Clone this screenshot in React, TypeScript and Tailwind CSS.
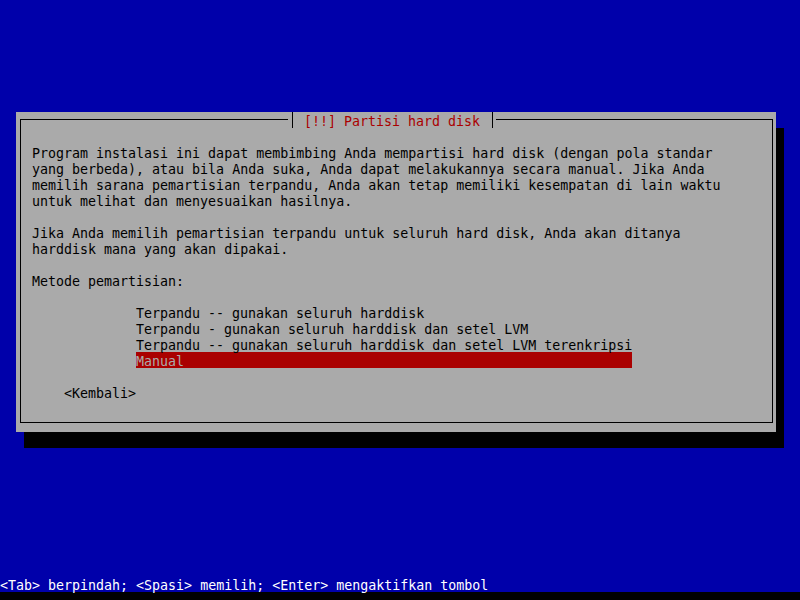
const bodyLines = [
  'Program instalasi ini dapat membimbing Anda mempartisi hard disk (dengan pola standar',
  'yang berbeda), atau bila Anda suka, Anda dapat melakukannya secara manual. Jika Anda',
  'memilih sarana pemartisian terpandu, Anda akan tetap memiliki kesempatan di lain waktu',
  'untuk melihat dan menyesuaikan hasilnya.',
  '',
  'Jika Anda memilih pemartisian terpandu untuk seluruh hard disk, Anda akan ditanya',
  'harddisk mana yang akan dipakai.',
  '',
  'Metode pemartisian:',
  '',
]

const options = [
  'Terpandu -- gunakan seluruh harddisk',
  'Terpandu - gunakan seluruh harddisk dan setel LVM',
  'Terpandu -- gunakan seluruh harddisk dan setel LVM terenkripsi',
  'Manual',
]

const App = () => {
  return (
    <div className="w-[800px] h-[600px] bg-black overflow-hidden font-['DejaVu_Sans_Mono',monospace] text-[13.3px] leading-[20px]">
      <div className="h-[592px] bg-[#0000aa] flex flex-col">
        {/* DIALOG */}
        <div className="mt-[112px] ml-[16px] w-[760px] h-[320px] bg-[#aaaaaa] shadow-[8px_16px_0_#000] pt-[7px] pl-[4px] pr-[3px] pb-[9px]">
          <div className="relative h-full border border-black pt-[24px] pl-[11px] text-black">
            {/* title over top border */}
            <div className="absolute left-[267px] top-[-8px] h-4 flex items-stretch bg-[#aaaaaa]">
              <div className="w-2 flex justify-center">
                <div className="w-px bg-black" />
              </div>
              <span className="w-2" />
              <span className="whitespace-pre text-[#aa0000]">[!!] Partisi hard disk</span>
              <span className="w-2" />
              <div className="w-2 flex justify-center">
                <div className="w-px bg-black" />
              </div>
            </div>

            {bodyLines.map((line, i) => (
              <div key={i} className="h-4 whitespace-pre">{line}</div>
            ))}

            {/* OPTIONS */}
            <div className="pl-[104px]">
              {options.map((opt, i) => (
                <div
                  key={i}
                  className={i === 3
                    ? 'h-4 w-[496px] whitespace-pre bg-[#aa0000] text-[#aaaaaa]'
                    : 'h-4 whitespace-pre'}
                >
                  {opt}
                </div>
              ))}
            </div>

            <div className="h-4" />
            <div className="h-4 pl-[32px] whitespace-pre">&lt;Kembali&gt;</div>
          </div>
        </div>

        {/* STATUS LINE */}
        <div className="mt-auto h-4 whitespace-pre text-white">
          &lt;Tab&gt; berpindah; &lt;Spasi&gt; memilih; &lt;Enter&gt; mengaktifkan tombol
        </div>
      </div>
    </div>
  )
}

export default App
